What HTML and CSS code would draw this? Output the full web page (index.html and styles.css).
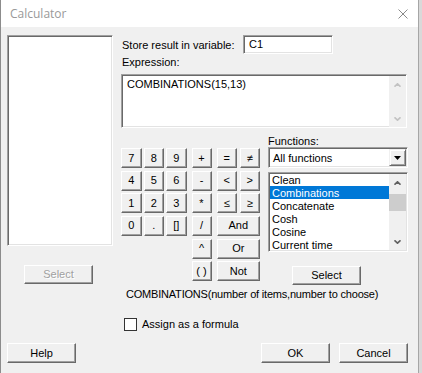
FILE: index.html
```html
<!DOCTYPE html>
<html>
<head>
<meta charset="utf-8">
<link rel="stylesheet" href="styles.css">
</head>
<body>
<div class="window">
  <div class="titlebar">
    <span class="title">Calculator</span>
    <svg class="close" viewBox="0 0 10 10"><path d="M0.5 0.5 L9.5 9.5 M9.5 0.5 L0.5 9.5" stroke="#8a8a8a" stroke-width="1" fill="none"/></svg>
  </div>
  <div class="client">
    <div class="top">
      <div class="leftcol">
        <div class="varlist sunken"></div>
        <button class="btn btn-select-left" disabled>Select</button>
      </div>
      <div class="rightcol">
        <div class="store-row">
          <span class="store-label">Store result in variable:</span>
          <div class="store-input sunken">C1</div>
        </div>
        <div class="expr-label">Expression:</div>
        <div class="expr sunken">
          <div class="expr-text">COMBINATIONS(15,13)</div>
          <div class="vscroll vscroll-disabled">
            <div class="sb-btn"><svg viewBox="0 0 7 4"><polyline points="0.5,3.7 3.5,0.8 6.5,3.7" fill="none" stroke="#c2c2c2" stroke-width="1.6"/></svg></div>
            <div class="sb-track"></div>
            <div class="sb-btn"><svg viewBox="0 0 7 4"><polyline points="0.5,0.3 3.5,3.2 6.5,0.3" fill="none" stroke="#c2c2c2" stroke-width="1.6"/></svg></div>
          </div>
        </div>
        <div class="middle">
          <div class="keypad">
            <div class="digits">
              <button class="btn key">7</button><button class="btn key">8</button><button class="btn key">9</button>
              <button class="btn key">4</button><button class="btn key">5</button><button class="btn key">6</button>
              <button class="btn key">1</button><button class="btn key">2</button><button class="btn key">3</button>
              <button class="btn key">0</button><button class="btn key">.</button><button class="btn key">[]</button>
            </div>
            <div class="ops1">
              <button class="btn key">+</button>
              <button class="btn key">-</button>
              <button class="btn key">*</button>
              <button class="btn key">/</button>
              <button class="btn key">^</button>
              <button class="btn key">( )</button>
            </div>
            <div class="ops2">
              <button class="btn key">=</button><button class="btn key">&#8800;</button>
              <button class="btn key">&lt;</button><button class="btn key">&gt;</button>
              <button class="btn key">&#8804;</button><button class="btn key">&#8805;</button>
              <button class="btn key wide">And</button>
              <button class="btn key wide">Or</button>
              <button class="btn key wide">Not</button>
            </div>
          </div>
          <div class="functions">
            <div class="func-label">Functions:</div>
            <div class="combo sunken">
              <span class="combo-text">All functions</span>
              <span class="combo-btn"><svg viewBox="0 0 7 4"><polygon points="0,0 7,0 3.5,4" fill="#000"/></svg></span>
            </div>
            <div class="funclist sunken">
              <ul class="items">
                <li>Clean</li>
                <li class="selected">Combinations</li>
                <li>Concatenate</li>
                <li>Cosh</li>
                <li>Cosine</li>
                <li>Current time</li>
              </ul>
              <div class="vscroll">
                <div class="sb-btn"><svg viewBox="0 0 7 4"><polyline points="0.5,3.7 3.5,0.8 6.5,3.7" fill="none" stroke="#606060" stroke-width="1.6"/></svg></div>
                <div class="sb-track"><div class="sb-thumb"></div></div>
                <div class="sb-btn"><svg viewBox="0 0 7 4"><polyline points="0.5,0.3 3.5,3.2 6.5,0.3" fill="none" stroke="#606060" stroke-width="1.6"/></svg></div>
              </div>
            </div>
            <button class="btn btn-select">Select</button>
          </div>
        </div>
        <div class="desc">COMBINATIONS(number of items,number to choose)</div>
        <div class="check-row">
          <span class="checkbox"></span>
          <span class="check-label">Assign as a formula</span>
        </div>
      </div>
    </div>
    <div class="footer">
      <button class="btn foot-btn">Help</button>
      <span class="spacer"></span>
      <button class="btn foot-btn">OK</button>
      <button class="btn foot-btn">Cancel</button>
    </div>
  </div>
</div>
</body>
</html>
```

FILE: styles.css
```css
body {
  margin: 0;
  background: #d9d9d9;
  font-family: "Liberation Sans", Arial, sans-serif;
  font-size: 11px;
  color: #000;
}

.window {
  width: 419px;
  height: 373px;
  box-sizing: border-box;
  border-left: 1px solid #8c8c8c;
  border-right: 1px solid #a6a6a6;
  background: #f0f0f0;
  display: flex;
  flex-direction: column;
}

.titlebar {
  height: 27px;
  flex: none;
  background: #fff;
  display: flex;
  align-items: center;
}

.title {
  font-family: "Open Sans", "Noto Sans", sans-serif;
  font-size: 12px;
  color: #999;
  margin-left: 9px;
}

.close {
  margin-left: auto;
  margin-right: 10px;
  width: 10px;
  height: 10px;
}

.client {
  padding: 8px 0 0 6px;
}

.top {
  display: flex;
}

.sunken {
  box-sizing: border-box;
  background: #fff;
  border: 1px solid;
  border-color: #a0a0a0 #fff #fff #a0a0a0;
  box-shadow: inset 1px 1px #696969, inset -1px -1px #e3e3e3;
}

.btn {
  box-sizing: border-box;
  margin: 0;
  padding: 0;
  font-family: "Liberation Sans", Arial, sans-serif;
  font-size: 11px;
  color: #000;
  background: #f0f0f0;
  border: 1px solid;
  border-color: #fff #696969 #696969 #fff;
  box-shadow: inset -1px -1px #a0a0a0;
  border-radius: 0;
  line-height: 1;
}

.btn:disabled {
  color: #a0a0a0;
  text-shadow: 1px 1px #fff;
}

.leftcol {
  width: 106px;
  margin-right: 8px;
  display: flex;
  flex-direction: column;
  align-items: flex-start;
}

.varlist {
  width: 106px;
  height: 211px;
}

.btn-select-left {
  margin: 19px 0 0 17px;
  width: 69px;
  height: 19px;
}

.rightcol {
  width: 287px;
}

.store-row {
  display: flex;
  align-items: center;
  height: 19px;
}

.store-label {
  width: 121px;
  padding-left: 1px;
}

.store-input {
  width: 90px;
  height: 19px;
  padding: 0 0 0 5px;
  line-height: 17px;
}

.expr-label {
  margin-top: 2px;
  padding-left: 1px;
  line-height: 13px;
}

.expr {
  margin-top: 5px;
  width: 286px;
  height: 54px;
  display: flex;
  padding: 1px 0 0 1px;
}

.expr-text {
  flex: 1;
  padding: 2px 0 0 4px;
  line-height: 13px;
}

.vscroll {
  width: 17px;
  background: #f0f0f0;
  display: flex;
  flex-direction: column;
}

.sb-btn {
  height: 17px;
  flex: none;
  display: flex;
  align-items: center;
  justify-content: center;
}

.sb-btn svg {
  width: 7px;
  height: 4px;
}

.sb-track {
  flex: 1;
}

.sb-thumb {
  margin-top: 3px;
  height: 17px;
  background: #cdcdcd;
}

.middle {
  display: flex;
  margin-top: 7px;
}

.keypad {
  display: flex;
  align-items: flex-start;
  margin-top: 13px;
}

.digits {
  display: grid;
  grid-template-columns: repeat(3, 20.5px);
  grid-auto-rows: 20px;
  column-gap: 2px;
  row-gap: 2.67px;
}

.ops1 {
  margin-left: 5px;
  display: grid;
  grid-template-columns: 20px;
  grid-auto-rows: 20px;
  row-gap: 2.67px;
}

.ops2 {
  margin-left: 5px;
  display: grid;
  grid-template-columns: repeat(2, 20.5px);
  grid-auto-rows: 20px;
  column-gap: 2.5px;
  row-gap: 2.67px;
}

.key {
  width: 100%;
  height: 100%;
}

.wide {
  grid-column: span 2;
}

.functions {
  margin-left: 8px;
  width: 140px;
  display: flex;
  flex-direction: column;
  align-items: flex-start;
}

.func-label {
  line-height: 12px;
}

.combo {
  width: 140px;
  height: 21px;
  display: flex;
  align-items: center;
  padding: 2px 1px 2px 4px;
}

.combo-text {
  flex: 1;
}

.combo-btn {
  width: 17px;
  height: 17px;
  box-sizing: border-box;
  background: #f0f0f0;
  border: 1px solid;
  border-color: #f0f0f0 #696969 #696969 #f0f0f0;
  box-shadow: inset 1px 1px #fff, inset -1px -1px #a0a0a0;
  display: flex;
  align-items: center;
  justify-content: center;
}

.combo-btn svg {
  width: 7px;
  height: 4px;
}

.funclist {
  margin-top: 4px;
  width: 140px;
  height: 80px;
  display: flex;
  padding: 0 1px 1px 1px;
  overflow: hidden;
}

.items {
  flex: 1;
  list-style: none;
  margin: 0;
  padding: 0;
}

.items li {
  height: 13px;
  line-height: 14px;
  padding-left: 2px;
  white-space: nowrap;
  overflow: hidden;
}

.items li.selected {
  background: #0078d7;
  color: #fff;
}

.funclist .vscroll {
  margin-top: 1px;
}

.btn-select {
  margin: 14px 0 0 24px;
  width: 69px;
  height: 19px;
}

.desc {
  margin-top: 3px;
  padding-left: 5px;
  line-height: 13px;
  letter-spacing: -0.2px;
  white-space: nowrap;
}

.check-row {
  margin-top: 17px;
  margin-left: 3px;
  display: flex;
  align-items: center;
  height: 13px;
}

.checkbox {
  width: 13px;
  height: 13px;
  box-sizing: border-box;
  border: 1px solid #333;
  background: #fff;
}

.check-label {
  margin-left: 5px;
  line-height: 13px;
}

.footer {
  margin-top: 12px;
  display: flex;
  align-items: center;
  padding-right: 10px;
}

.foot-btn {
  width: 69px;
  height: 20px;
}

.spacer {
  flex: 1;
}

.footer .foot-btn + .foot-btn {
  margin-left: 9px;
}
```
